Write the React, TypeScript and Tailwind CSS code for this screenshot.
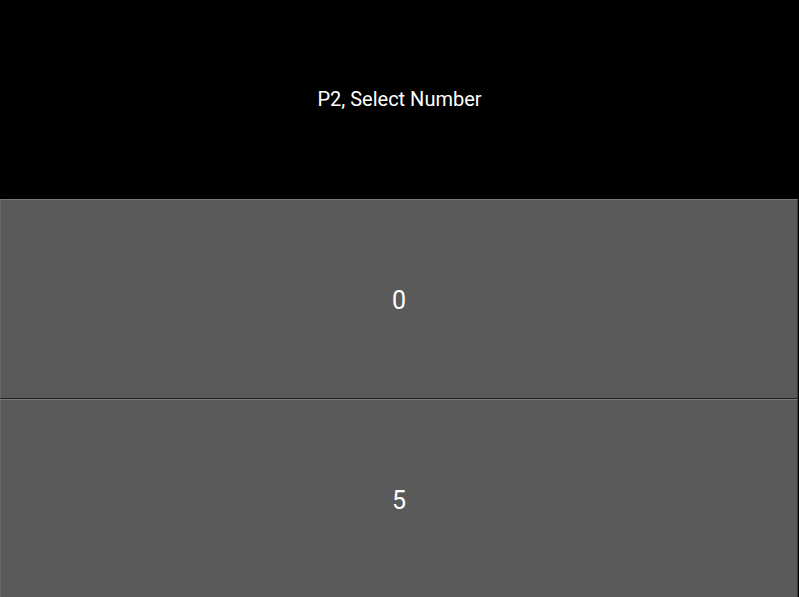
export default function App() {
  const numbers = [0, 5];

  return (
    <div className="h-[597px] w-[799px] overflow-hidden bg-black font-['Roboto',sans-serif] text-white">
      {/* HEADER */}
      <div className="flex h-[199px] items-center justify-center pb-[2px]">
        <p className="text-[20px]">P2, Select Number</p>
      </div>

      {/* NUMBER BUTTONS */}
      <div className="flex flex-col">
        {numbers.map((n) => (
          <button
            key={n}
            className="flex h-[200px] w-[798px] items-center justify-center border border-t-[#7a7a7a] border-l-[#6a6a6a] border-r-[#3a3a3a] border-b-[#1e1e1e] bg-[#5a5a5a] pt-[4px] text-[25px]"
          >
            {n}
          </button>
        ))}
      </div>
    </div>
  );
}
